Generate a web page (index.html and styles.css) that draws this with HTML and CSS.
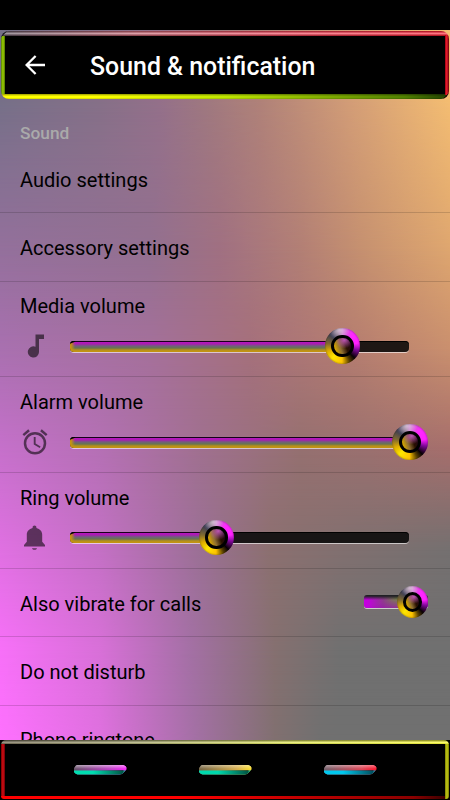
FILE: index.html
```
<!DOCTYPE html>
<html>
<head>
<meta charset="utf-8">
<title>Sound &amp; notification</title>
<link rel="stylesheet" href="styles.css">
</head>
<body>
<div class="wallpaper"><i></i><i></i><i></i><i></i><i></i><i></i><i></i></div>
<div class="screen">
  <div class="statusbar"></div>
  <header class="appbar">
    <div class="appbar-inner">
      <svg class="back" viewBox="0 0 20 20" width="20" height="20"><path d="M20 10H1.8M10.6 1L1.6 10l9 9" fill="none" stroke="#fff" stroke-width="2.3"/></svg>
      <h1>Sound &amp; notification</h1>
    </div>
  </header>

  <main class="list">
    <h2>Sound</h2>
    <div class="row first">Audio settings</div>
    <div class="row">Accessory settings</div>

    <div class="row volume">
      <div class="label">Media volume</div>
      <div class="control">
        <svg class="icon" viewBox="0 0 30 30"><path d="M15.500 3.500V15.800A5.600 5.600 0 1 0 19 21V8h5V3.500z"/></svg>
        <div class="track"><div class="fill" style="width:80.2%"><span class="knob"></span></div></div>
      </div>
    </div>

    <div class="row volume">
      <div class="label">Alarm volume</div>
      <div class="control">
        <svg class="icon" viewBox="0 0 24 24"><path d="M22 5.72l-4.6-3.86-1.29 1.53 4.6 3.86L22 5.72zM7.88 3.39L6.6 1.86 2 5.71l1.29 1.53 4.59-3.85zM12.5 8H11v6l4.75 2.85.75-1.23-4-2.37V8zM12 4a9 9 0 1 0 0 18 9 9 0 0 0 0-18zm0 16a7 7 0 1 1 0-14 7 7 0 0 1 0 14z"/></svg>
        <div class="track"><div class="fill" style="width:100%"><span class="knob"></span></div></div>
      </div>
    </div>

    <div class="row volume">
      <div class="label">Ring volume</div>
      <div class="control">
        <svg class="icon" viewBox="0 0 30 30"><path d="M12 25.300h5c-.4 1-1.200 1.500-2.500 1.500s-2.100-.5-2.500-1.500zM22.200 18.800v-7c0-3.600-2.200-6-5.800-6.900V4.200c0-1-.8-1.700-1.900-1.700s-1.900.7-1.900 1.700v.7c-3.600.9-5.800 3.300-5.800 6.900v7L4 22v1.500h21V22z"/></svg>
        <div class="track"><div class="fill" style="width:43%"><span class="knob"></span></div></div>
      </div>
    </div>

    <div class="row toggle">
      <span>Also vibrate for calls</span>
      <div class="switch"><span class="knob small"></span></div>
    </div>
    <div class="row">Do not disturb</div>
    <div class="row">Phone ringtone</div>
  </main>

  <nav class="navbar">
    <div class="navbar-inner">
      <span class="pill magenta"></span>
      <span class="pill gold"></span>
      <span class="pill red"></span>
    </div>
  </nav>
</div>
</body>
</html>
```
FILE: styles.css
```
* {box-sizing:border-box;}
body {margin:0; width:450px; height:800px; overflow:hidden; position:relative; background:#000; font-family:Roboto, sans-serif; color:#000;}

/* wallpaper: each strip fades in below the previous one */
.wallpaper {position:absolute; top:30px; left:0; width:450px; height:710px; overflow:hidden;}
.wallpaper i {position:absolute; left:0; right:0; bottom:0;}
.wallpaper i:nth-child(1) {top:0; background:linear-gradient(90deg,#767088 0,#867088 100px,#94708a 160px,#a0797f 210px,#b08279 260px,#d39d77 350px,#f4bd72 450px);}
.wallpaper i:nth-child(2) {top:70px; background:linear-gradient(90deg,#94709c 0,#937090 150px,#a07082 220px,#b27f75 300px,#c59070 360px,#dea66f 450px);}
.wallpaper i:nth-child(3) {top:220px; background:linear-gradient(90deg,#a970b0 0,#a5709b 150px,#a5707c 250px,#b47c70 350px,#c98f6e 450px);}
.wallpaper i:nth-child(4) {top:320px; background:linear-gradient(90deg,#c670cb 0,#b570b5 100px,#a07090 200px,#957070 300px,#9b706f 370px,#a56e6c 450px);}
.wallpaper i:nth-child(5) {top:420px; background:linear-gradient(90deg,#e070e2 0,#c470c5 100px,#9b7095 200px,#8c7070 270px,#807070 350px,#747070 450px);}
.wallpaper i:nth-child(6) {top:520px; background:linear-gradient(90deg,#f770f8 0,#d870d8 100px,#a470a5 190px,#857070 275px,#707070 340px);}
.wallpaper i:nth-child(7) {top:620px; background:linear-gradient(90deg,#ff70ff 0,#e070e0 100px,#a470a5 195px,#807070 275px,#707070 320px);}
.wallpaper i + i {-webkit-mask-image:linear-gradient(transparent,#000 100px); mask-image:linear-gradient(transparent,#000 100px);}
.wallpaper i:nth-child(2) {-webkit-mask-image:linear-gradient(transparent,#000 150px); mask-image:linear-gradient(transparent,#000 150px);}

.screen {position:relative; height:800px; display:flex; flex-direction:column;}
.statusbar {height:30px; background:#000;}

.appbar {height:69px; padding:1px 1px 0;}
.appbar-inner {height:68px; display:flex; align-items:center; padding:0 0 0 24px; border-radius:8px;
  background:
    linear-gradient(135deg,#101018 4px,transparent 5px),
    linear-gradient(315deg,#100 4px,transparent 5px),
    linear-gradient(#000,#000) 4px 5px/440px 58px no-repeat,
    linear-gradient(90deg,#558008,#9cd000 50%,#4c7000) 0 5px/4px 58px no-repeat,
    linear-gradient(90deg,#a00010,#f02030 45%,#600008) 444px 4px/4px 60px no-repeat,
    linear-gradient(rgba(0,0,0,.35),rgba(255,255,255,.45) 50%,rgba(0,0,0,.35)) 0 0/100% 5px no-repeat,
    linear-gradient(90deg,#504050,#c05060 30%,#f02840 65%,#ff0018) 0 0/100% 5px no-repeat,
    linear-gradient(rgba(0,0,0,.4),transparent 45%,transparent 75%,rgba(0,0,0,.2)) 0 63px/100% 5px no-repeat,
    linear-gradient(90deg,#ff0 20%,#bfe600 50%,#508000 90%,#204000) 0 63px/100% 5px no-repeat,
    #000;}
.back {margin-right:45px;}
h1 {margin:2px 0 0; font-size:24.9px; font-weight:500; color:#fff; white-space:nowrap;}

.list {height:641px; overflow:hidden;}
h2 {margin:0; height:46px; padding:23px 20px 0; font-size:17.3px; line-height:22px; font-weight:500; color:#aaa;}
.row {height:68.3px; padding:1.5px 20px 0; display:flex; align-items:center; font-size:20px; border-bottom:1px solid rgba(0,0,0,.15);}
.row.first {padding-top:3px;}
.row.volume {height:95.8px; display:block; padding-top:12px;}
.label {line-height:26px; height:26px; margin-top:-.6px; margin-bottom:.6px;}
.control {display:flex; align-items:center; height:30px; margin-top:12.3px;}
.icon {width:30px; height:30px; margin-right:20px; fill:#000; opacity:.56;}
.track {width:339px; height:11px; border-radius:4px; background:rgba(8,8,8,.88); box-shadow:inset 0 1px #000, 0 1px rgba(255,255,255,.6);}
.fill {height:11px; position:relative; border-radius:4px 0 0 4px; background:
  linear-gradient(160deg,#000 2px,transparent 3px) 0 0/5px 6px no-repeat,
  linear-gradient(90deg,#c6940f 1px,transparent 5px),
  linear-gradient(#16001a 1px,#b516bd 1.5px,#a71eaf 3px,#70607c 5px,#677450 7px,#b6901a 9px,#c6940f);}
.knob {position:absolute; right:-18.5px; top:-12.5px; width:35.5px; height:35.5px; border-radius:50%;
  background:radial-gradient(circle at 40% 3%,rgba(255,255,255,.6),transparent 27%),
    conic-gradient(#c66ec8,#ff28ff 40deg,#ff20ff 80deg,#80089a 105deg,#080004 135deg,#584000 155deg,#ffc400 182deg,#ffe600 220deg,#e0ae00 250deg,#806a30 280deg,#3c3c54 315deg,#806080 340deg,#c66ec8);
  box-shadow:inset 0 0 2px rgba(0,0,0,.5);}
.knob::after {content:""; position:absolute; inset:18.5%; border:3px solid #000; border-radius:50%;
  background:radial-gradient(circle at 60% 12%,rgba(240,110,240,.75),transparent 50%),linear-gradient(70deg,#d8a800 12%,#8e6e30 38%,#281000 65%,#200020);}
.row.toggle {justify-content:space-between; padding-top:2.5px; padding-right:22px;}
.switch {position:relative; width:64px; height:13px; margin-top:-4px; border-radius:3px; background:linear-gradient(#202024 1px,transparent 5px),linear-gradient(165deg,transparent 40%,#a000c0 90%),linear-gradient(90deg,#c400e0 5%,#903890 30%,#73953e 55%); box-shadow:0 1px rgba(255,255,255,.65);}
.knob.small {width:31px; height:32px; right:0; top:-9px;}

.navbar {height:60px; padding:0 1px 1px;}
.navbar-inner {height:59px; display:flex; align-items:center; justify-content:center; gap:71px; padding-left:1px; border-radius:5px 5px 3px 3px;
  background:
    linear-gradient(#000,#000) 4px 4px/440px 52px no-repeat,
    linear-gradient(90deg,#780000,#d50d14 50%,#650008) 0 4px/4px 52px no-repeat,
    linear-gradient(90deg,#7c8000,#c6cc18 50%,#777b00) 444px 4px/4px 55px no-repeat,
    linear-gradient(rgba(0,0,0,.5),rgba(255,255,255,.3) 60%,rgba(0,0,0,.15)) 0 0/100% 4px no-repeat,
    linear-gradient(90deg,#706850,#a6a66c 30%,#e5eb55 65%,#ffff30) 0 0/100% 4px no-repeat,
    linear-gradient(90deg,#f00,#f00 40%,#8a0000 92%,#300) 0 56px/100% 3px no-repeat,
    #000;}
.pill {position:relative; width:54px; height:10px; clip-path:path("M5 0H48Q54 1 53 5L50 8Q49 10 46 10H4Q0 9 0 5Q2 0 5 0Z");}
.pill.magenta {background:linear-gradient(rgba(255,255,255,.5),transparent 4px),linear-gradient(#0000 5px,#00ddb0 6px),linear-gradient(90deg,#655067,#c440cc 70%,#ff20ff);}
.pill.gold {background:linear-gradient(rgba(255,255,255,.4),transparent 4px),linear-gradient(#0000 5px,#00d8ad 6px),linear-gradient(90deg,#756544,#d6ae4e 70%,#ffe42c);}
.pill.red {background:linear-gradient(rgba(255,255,255,.4),transparent 4px),linear-gradient(#0000 5px,#00c8ee 6px),linear-gradient(90deg,#72606a,#dc4656 70%,#ff1028);}
.pill::after {content:""; position:absolute; left:0; right:0; bottom:0; height:5px; background:linear-gradient(90deg,transparent 35%,rgba(0,0,0,.6) 90%,transparent 95%);}
```
